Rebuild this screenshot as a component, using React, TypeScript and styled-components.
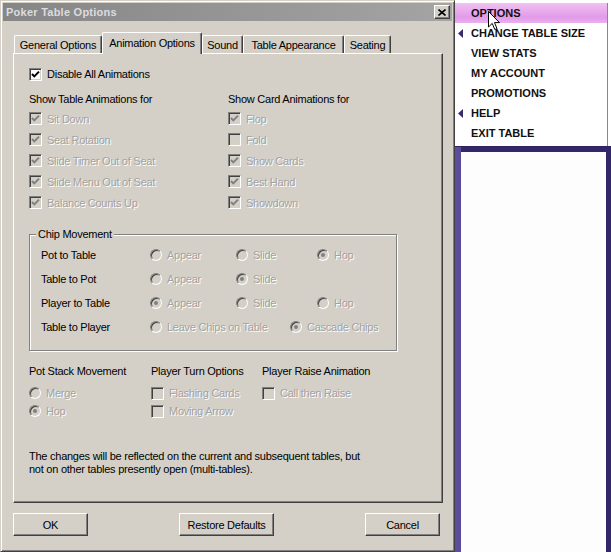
import React from "react";
import styled, { createGlobalStyle } from "styled-components";

const Global = createGlobalStyle`
  html, body { margin: 0; padding: 0; background: #d4d0c8; }
  body { font-family: "Liberation Sans", Arial, sans-serif; font-size: 11px; }
`;

const Screen = styled.div`
  position: relative;
  display: flex;
  width: 611px;
  height: 552px;
  overflow: hidden;
`;

const Dialog = styled.div`
  box-sizing: border-box;
  flex: none;
  width: 455px;
  height: 552px;
  padding: 2px;
  display: flex;
  flex-direction: column;
  background: #d4d0c8;
  border: 1px solid;
  border-color: #d4d0c8 #404040 #404040 #d4d0c8;
  box-shadow: inset 1px 1px 0 #fff, inset -1px -1px 0 #808080;
  font-family: "Liberation Sans", Arial, sans-serif;
  font-size: 11px;
  letter-spacing: -0.25px;
  color: #000;
`;

const TitleBar = styled.div`
  height: 18px;
  display: flex;
  align-items: center;
  justify-content: space-between;
  padding: 0 2px 0 3px;
  background: linear-gradient(to right, #868686, #a4a4a4);
`;

const Title = styled.span`
  font-weight: bold;
  font-size: 11px;
  letter-spacing: 0.25px;
  color: #dcdcdc;
`;

const CloseButton = styled.div`
  box-sizing: border-box;
  width: 16px;
  height: 14px;
  display: flex;
  align-items: center;
  justify-content: center;
  background: #d4d0c8;
  border: 1px solid;
  border-color: #fff #404040 #404040 #fff;
  box-shadow: inset -1px -1px 0 #808080;
`;

const TabRow = styled.div`
  display: flex;
  align-items: flex-end;
  height: 21px;
  margin: 11px 0 0 11px;
`;

const Tab = styled.div<{ $w: number; $active?: boolean }>`
  box-sizing: border-box;
  position: relative;
  z-index: ${(p) => (p.$active ? 2 : 1)};
  width: ${(p) => p.$w}px;
  height: ${(p) => (p.$active ? 22 : 18)}px;
  margin-bottom: ${(p) => (p.$active ? -1 : 0)}px;
  display: flex;
  align-items: ${(p) => (p.$active ? "flex-start" : "center")};
  padding-top: ${(p) => (p.$active ? 4 : 0)}px;
  justify-content: center;
  background: #d4d0c8;
  border-top: 1px solid #fff;
  border-left: 1px solid #fff;
  border-right: 1px solid #404040;
  border-radius: 2px 2px 0 0;
  box-shadow: inset -1px 0 0 #808080;
  white-space: nowrap;
`;

const Panel = styled.div`
  box-sizing: border-box;
  width: 430px;
  height: 450px;
  margin-left: 10px;
  border: 1px solid;
  border-color: #fff #404040 #404040 #fff;
  box-shadow: inset -1px -1px 0 #808080;
  padding: 13px 0 0 15px;
  display: flex;
  flex-direction: column;
`;

const Columns = styled.div<{ $mt: number }>`
  display: flex;
  margin-top: ${(p) => p.$mt}px;
`;

const Column = styled.div<{ $w?: number }>`
  display: flex;
  flex-direction: column;
  width: ${(p) => (p.$w ? `${p.$w}px` : "auto")};
  flex: ${(p) => (p.$w ? "none" : "1")};
`;

const Header = styled.div<{ $h: number; $mb?: number }>`
  height: ${(p) => p.$h}px;
  line-height: ${(p) => p.$h}px;
  margin-bottom: ${(p) => p.$mb ?? 0}px;
  white-space: nowrap;
`;

const Row = styled.div<{ $h: number; $w?: number }>`
  display: flex;
  align-items: center;
  gap: 5px;
  height: ${(p) => p.$h}px;
  width: ${(p) => (p.$w ? `${p.$w}px` : "auto")};
  flex: none;
  white-space: nowrap;
`;

const Label = styled.span<{ $disabled?: boolean }>`
  color: ${(p) => (p.$disabled ? "#a2a2a2" : "#000")};
  text-shadow: ${(p) => (p.$disabled ? "1px 1px 0 #fff" : "none")};
`;

const Box = styled.span<{ $disabled?: boolean }>`
  box-sizing: border-box;
  flex: none;
  width: 13px;
  height: 13px;
  display: flex;
  align-items: center;
  justify-content: center;
  border: 1px solid;
  border-color: #808080 #fff #fff #808080;
  box-shadow: inset 1px 1px 0 #404040, inset -1px -1px 0 #d4d0c8;
  background: ${(p) => (p.$disabled ? "#d4d0c8" : "#fff")};
`;

const Round = styled.span<{ $disabled?: boolean }>`
  box-sizing: border-box;
  flex: none;
  width: 12px;
  height: 12px;
  display: flex;
  align-items: center;
  justify-content: center;
  border-radius: 50%;
  border: 1px solid;
  border-color: #808080 #fff #fff #808080;
  box-shadow: inset 1px 1px 0 #404040, inset -1px -1px 0 #d4d0c8;
  background: ${(p) => (p.$disabled ? "#d4d0c8" : "#fff")};
`;

const Dot = styled.span<{ $disabled?: boolean }>`
  width: 4px;
  height: 4px;
  border-radius: 50%;
  background: ${(p) => (p.$disabled ? "#808080" : "#000")};
`;

const GroupBox = styled.div`
  box-sizing: border-box;
  position: relative;
  width: 368px;
  height: 117px;
  margin-top: 21px;
  padding: 8px 0 0 11px;
  border: 1px solid #808080;
  box-shadow: inset 1px 1px 0 #fff, 1px 1px 0 #fff;
  display: flex;
  flex-direction: column;
`;

const Legend = styled.span`
  position: absolute;
  top: -7px;
  left: 6px;
  padding: 0 2px;
  line-height: 13px;
  background: #d4d0c8;
`;

const GroupRow = styled.div`
  display: flex;
  align-items: center;
  height: 24px;
`;

const RowTitle = styled.span`
  width: 109px;
  flex: none;
`;

const Note = styled.div`
  margin-top: 30px;
  line-height: 13px;
`;

const ButtonRow = styled.div`
  display: flex;
  justify-content: space-between;
  width: 427px;
  margin: 10px 0 0 10px;
`;

const Button = styled.div<{ $w: number }>`
  box-sizing: border-box;
  width: ${(p) => p.$w}px;
  height: 23px;
  display: flex;
  align-items: center;
  justify-content: center;
  background: #d4d0c8;
  border: 1px solid;
  border-color: #fff #404040 #404040 #fff;
  box-shadow: inset -1px -1px 0 #808080;
`;

/* right side */
const Side = styled.div`
  flex: 1;
  display: flex;
  flex-direction: column;
  background: #33276a;
`;

const Menu = styled.div`
  box-sizing: border-box;
  height: 147px;
  padding: 3px 3px 0 0;
  background: #fff;
  border-bottom: 1px solid #2e2262;
`;

const MenuInner = styled.div`
  height: 100%;
  border-right: 1px solid #8a80ac;
  display: flex;
  flex-direction: column;
`;

const MenuItem = styled.div<{ $active?: boolean }>`
  display: flex;
  align-items: center;
  height: 20px;
  font-family: "Liberation Sans", Arial, sans-serif;
  font-weight: bold;
  font-size: 11px;
  color: #111;
  background: ${(p) =>
    p.$active ? "linear-gradient(to bottom, #f0c2f2, #e39ae9 70%, #eab0ee)" : "transparent"};
`;

const ArrowSlot = styled.span`
  width: 16px;
  flex: none;
  display: flex;
  align-items: center;
  padding-left: 3px;
  box-sizing: border-box;
`;

const LowerArea = styled.div`
  flex: 1;
  display: flex;
  padding: 5px 5px 0 6px;
  background: linear-gradient(to right, #5d4e9e 0, #5a4b9a 6px, #33276a 6px);
`;

const WhitePanel = styled.div`
  flex: 1;
  background: #fdfdfd;
`;

const Cursor = styled.svg`
  position: absolute;
  left: 488px;
  top: 11px;
`;

function CheckMark({ color }: { color: string }) {
  return (
    <svg width="9" height="9" viewBox="0 0 9 9">
      <path d="M1 4 L3.3 6.4 L8 1.6" fill="none" stroke={color} strokeWidth="2" />
    </svg>
  );
}

function Check({ label, checked, disabled, h, w }: { label: string; checked?: boolean; disabled?: boolean; h: number; w?: number }) {
  return (
    <Row $h={h} $w={w}>
      <Box $disabled={disabled}>{checked && <CheckMark color={disabled ? "#808080" : "#000"} />}</Box>
      <Label $disabled={disabled}>{label}</Label>
    </Row>
  );
}

function Radio({ label, checked, w, h = 24 }: { label: string; checked?: boolean; w?: number; h?: number }) {
  return (
    <Row $h={h} $w={w}>
      <Round $disabled>{checked && <Dot $disabled />}</Round>
      <Label $disabled>{label}</Label>
    </Row>
  );
}

function LeftArrow() {
  return (
    <svg width="5" height="9" viewBox="0 0 5 9">
      <path d="M5 0 L0 4.5 L5 9 Z" fill="#3b2a6e" />
    </svg>
  );
}

const tabs = [
  { t: "General Options", w: 88 },
  { t: "Animation Options", w: 100, active: true },
  { t: "Sound", w: 41 },
  { t: "Table Appearance", w: 101 },
  { t: "Seating", w: 47 },
];

const menu = [
  { t: "OPTIONS", active: true },
  { t: "CHANGE TABLE SIZE", arrow: true },
  { t: "VIEW STATS" },
  { t: "MY ACCOUNT" },
  { t: "PROMOTIONS" },
  { t: "HELP", arrow: true },
  { t: "EXIT TABLE" },
];

export default function App() {
  return (
    <Screen>
      <Global />
      <Dialog>
        <TitleBar>
          <Title>Poker Table Options</Title>
          <CloseButton>
            <svg width="8" height="7" viewBox="0 0 8 7">
              <path d="M0.5 0.5 L7.5 6.5 M7.5 0.5 L0.5 6.5" stroke="#000" strokeWidth="1.6" />
            </svg>
          </CloseButton>
        </TitleBar>
        <TabRow>
          {tabs.map((t) => (
            <Tab key={t.t} $w={t.w} $active={t.active}>
              {t.t}
            </Tab>
          ))}
        </TabRow>
        <Panel>
          <Check label="Disable All Animations" checked h={14} />
          <Columns $mt={9}>
            <Column $w={199}>
              <Header $h={18}>Show Table Animations for</Header>
              <Check label="Sit Down" checked disabled h={21} />
              <Check label="Seat Rotation" checked disabled h={21} />
              <Check label="Slide Timer Out of Seat" checked disabled h={21} />
              <Check label="Slide Menu Out of Seat" checked disabled h={21} />
              <Check label="Balance Counts Up" checked disabled h={21} />
            </Column>
            <Column>
              <Header $h={18}>Show Card Animations for</Header>
              <Check label="Flop" checked disabled h={21} />
              <Check label="Fold" disabled h={21} />
              <Check label="Show Cards" checked disabled h={21} />
              <Check label="Best Hand" checked disabled h={21} />
              <Check label="Showdown" checked disabled h={21} />
            </Column>
          </Columns>
          <GroupBox>
            <Legend>Chip Movement</Legend>
            <GroupRow>
              <RowTitle>Pot to Table</RowTitle>
              <Radio label="Appear" w={86} />
              <Radio label="Slide" w={81} />
              <Radio label="Hop" checked />
            </GroupRow>
            <GroupRow>
              <RowTitle>Table to Pot</RowTitle>
              <Radio label="Appear" w={86} />
              <Radio label="Slide" checked w={81} />
            </GroupRow>
            <GroupRow>
              <RowTitle>Player to Table</RowTitle>
              <Radio label="Appear" checked w={86} />
              <Radio label="Slide" w={81} />
              <Radio label="Hop" />
            </GroupRow>
            <GroupRow>
              <RowTitle>Table to Player</RowTitle>
              <Radio label="Leave Chips on Table" w={140} />
              <Radio label="Cascade Chips" checked />
            </GroupRow>
          </GroupBox>
          <Columns $mt={12}>
            <Column $w={122}>
              <Header $h={16} $mb={5}>Pot Stack Movement</Header>
              <Radio label="Merge" h={18} />
              <Radio label="Hop" checked h={18} />
            </Column>
            <Column $w={111}>
              <Header $h={16} $mb={5}>Player Turn Options</Header>
              <Check label="Flashing Cards" disabled h={18} />
              <Check label="Moving Arrow" disabled h={18} />
            </Column>
            <Column>
              <Header $h={16} $mb={5}>Player Raise Animation</Header>
              <Check label="Call then Raise" disabled h={18} />
            </Column>
          </Columns>
          <Note>
            The changes will be reflected on the current and subsequent tables, but
            <br />
            not on other tables presently open (multi-tables).
          </Note>
        </Panel>
        <ButtonRow>
          <Button $w={75}>OK</Button>
          <Button $w={95}>Restore Defaults</Button>
          <Button $w={75}>Cancel</Button>
        </ButtonRow>
      </Dialog>
      <Side>
        <Menu>
          <MenuInner>
            {menu.map((m) => (
              <MenuItem key={m.t} $active={m.active}>
                <ArrowSlot>{m.arrow && <LeftArrow />}</ArrowSlot>
                {m.t}
              </MenuItem>
            ))}
          </MenuInner>
        </Menu>
        <LowerArea>
          <WhitePanel />
        </LowerArea>
      </Side>
      <Cursor width="13" height="20" viewBox="0 0 13 20">
        <path d="M0.5 0.5 L0.5 16 L4.2 12.4 L6.8 18.5 L9 17.6 L6.5 11.6 L11.5 11.6 Z" fill="#fff" stroke="#000" strokeWidth="1" strokeLinejoin="miter" />
      </Cursor>
    </Screen>
  );
}
